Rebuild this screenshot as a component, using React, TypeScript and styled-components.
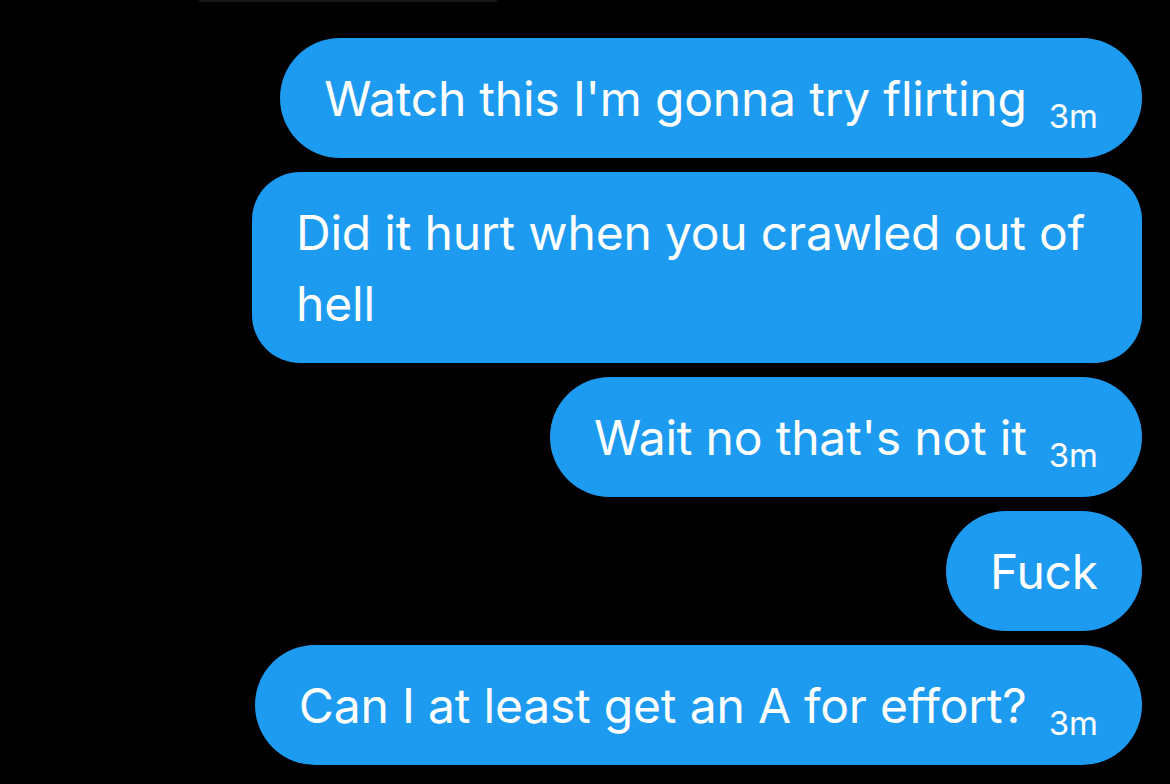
import React from "react";
import styled, { createGlobalStyle } from "styled-components";

const GlobalStyle = createGlobalStyle`
  html, body {
    margin: 0;
    padding: 0;
    background: #000;
  }
  body {
    width: 1170px;
    height: 784px;
    overflow: hidden;
    font-family: Inter, "Noto Sans", sans-serif;
  }
`;

const Page = styled.div`
  width: 1170px;
  height: 784px;
  background: #000;
  display: flex;
  flex-direction: column;
  box-sizing: border-box;
`;

const TopEdge = styled.div`
  width: 298px;
  height: 2px;
  margin-left: 199px;
  background: #17171b;
  flex: none;
`;

const Thread = styled.div`
  display: flex;
  flex-direction: column;
  align-items: flex-end;
  gap: 14px;
  padding: 36px 28px 0 0;
`;

const Bubble = styled.div<{ $multi?: boolean }>`
  box-sizing: border-box;
  max-width: 890px;
  background: #1d9bf0;
  color: #fff;
  border-radius: ${(p) => (p.$multi ? "48px" : "60px")};
  padding: 24.5px 44px;
  font-size: 48px;
  line-height: 71px;
  letter-spacing: -0.2px;
  font-weight: 400;
  white-space: ${(p) => (p.$multi ? "normal" : "nowrap")};
`;

const Time = styled.span`
  font-size: 33px;
  line-height: 0;
  letter-spacing: 0;
  margin-left: 22px;
  vertical-align: -12px;
`;

const messages: { text: string; time?: string; multi?: boolean }[] = [
  { text: "Watch this I'm gonna try flirting", time: "3m" },
  { text: "Did it hurt when you crawled out of hell", multi: true },
  { text: "Wait no that's not it", time: "3m" },
  { text: "Fuck" },
  { text: "Can I at least get an A for effort?", time: "3m" },
];

export default function App() {
  return (
    <>
      <GlobalStyle />
      <Page>
        <TopEdge />
        <Thread>
          {messages.map((m, i) => (
            <Bubble key={i} $multi={m.multi}>
              {m.text}
              {m.time && <Time>{m.time}</Time>}
            </Bubble>
          ))}
        </Thread>
      </Page>
    </>
  );
}
